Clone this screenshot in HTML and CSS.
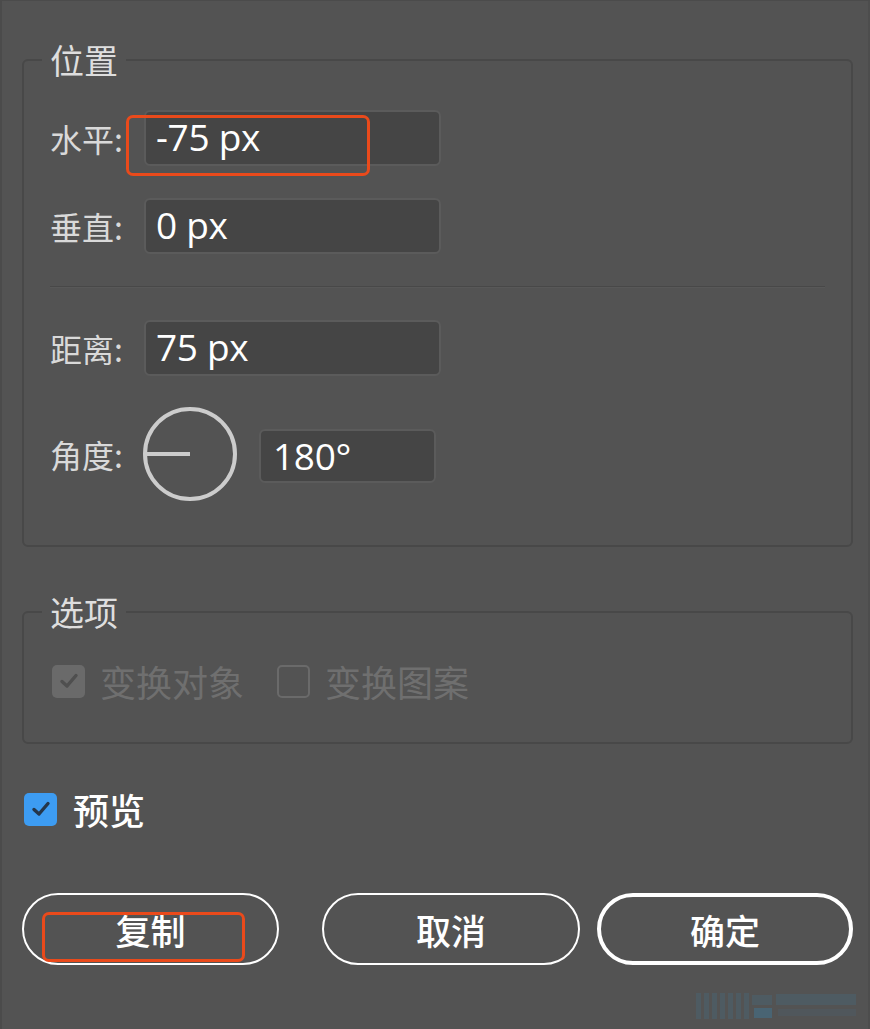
FILE: index.html
```html
<!DOCTYPE html>
<html lang="zh-CN">
<head>
<meta charset="utf-8">
<title>移动</title>
<link rel="stylesheet" href="styles.css">
</head>
<body>
<div class="dialog">
  <fieldset class="group group-position">
    <legend class="group-title">位置</legend>
    <div class="row">
      <span class="label">水平:</span>
      <div class="field field-wide">-75 px</div>
      <span class="mark mark-h"></span>
    </div>
    <div class="row">
      <span class="label">垂直:</span>
      <div class="field field-wide">0 px</div>
    </div>
    <div class="divider"></div>
    <div class="row">
      <span class="label">距离:</span>
      <div class="field field-wide">75 px</div>
    </div>
    <div class="row row-angle">
      <span class="label">角度:</span>
      <svg class="dial" width="96" height="96" viewBox="0 0 96 96">
        <circle cx="48" cy="48" r="45" fill="none" stroke="#cccccc" stroke-width="4"/>
        <line x1="4" y1="48" x2="48" y2="48" stroke="#cccccc" stroke-width="4"/>
      </svg>
      <div class="field field-angle">180°</div>
    </div>
  </fieldset>

  <fieldset class="group group-options">
    <legend class="group-title">选项</legend>
    <div class="options">
      <label class="check disabled">
        <span class="box box-checked-dim">
          <svg width="22" height="22" viewBox="0 0 22 22"><polyline points="4,11.5 9,16 18,5.5" fill="none" stroke="#4f4f4f" stroke-width="3.4" stroke-linecap="round" stroke-linejoin="round"/></svg>
        </span>
        <span class="check-text">变换对象</span>
      </label>
      <label class="check disabled">
        <span class="box box-empty"></span>
        <span class="check-text">变换图案</span>
      </label>
    </div>
  </fieldset>

  <label class="check preview">
    <span class="box box-blue">
      <svg width="22" height="22" viewBox="0 0 22 22"><polyline points="4,11.5 9,16 18,5.5" fill="none" stroke="#25364a" stroke-width="3.4" stroke-linecap="round" stroke-linejoin="round"/></svg>
    </span>
    <span class="check-text">预览</span>
  </label>

  <div class="buttons">
    <div class="btn btn-copy">复制<span class="mark mark-copy"></span></div>
    <div class="btn btn-cancel">取消</div>
    <div class="btn btn-ok">确定</div>
  </div>

  <svg class="watermark" width="166" height="32" viewBox="0 0 166 32">
    <g fill="#4a6676" opacity="0.45">
      <rect x="2" y="2" width="5" height="26"/>
      <rect x="10" y="2" width="5" height="26"/>
      <rect x="18" y="2" width="5" height="26"/>
      <rect x="26" y="2" width="5" height="26"/>
      <rect x="34" y="2" width="5" height="26"/>
      <rect x="42" y="2" width="5" height="26"/>
      <rect x="50" y="2" width="5" height="26"/>
      <rect x="58" y="4" width="20" height="10"/>
      <rect x="60" y="17" width="18" height="10" fill="#3f7a9a"/>
      <rect x="82" y="3" width="80" height="11"/>
      <rect x="84" y="18" width="78" height="7" opacity="0.6"/>
    </g>
  </svg>
</div>
</body>
</html>
```

FILE: styles.css
```css
html, body {
  margin: 0;
  padding: 0;
}

body {
  width: 870px;
  height: 1029px;
  background: #535353;
  font-family: "Noto Sans CJK SC", "Noto Sans", sans-serif;
  color: #dcdcdc;
  overflow: hidden;
}

.dialog {
  position: relative;
  box-sizing: border-box;
  width: 870px;
  height: 1029px;
  padding: 42px 17px 0 22px;
  box-shadow: inset 2px 1px 0 #4b4b4b, inset -2px 0 0 #4d4d4d;
}

.group {
  margin: 0;
  padding: 0 26px;
  border: 2px solid #484848;
  border-radius: 6px;
  min-inline-size: 0;
}

.group-title {
  margin-left: -8px;
  padding: 0 8px;
  font-size: 34px;
  line-height: 36px;
  color: #dedede;
}

.group-position {
  padding-bottom: 45px;
}

.row {
  position: relative;
  display: flex;
  align-items: center;
  margin-top: 32px;
  height: 56px;
}

.row-angle {
  height: 92px;
}

.label {
  width: 94px;
  flex: none;
  font-size: 32px;
  line-height: 36px;
  color: #d9d9d9;
}

.field {
  box-sizing: border-box;
  height: 56px;
  padding-left: 10px;
  background: #454545;
  border: 2px solid #5b5b5b;
  border-radius: 6px;
  font-family: "Open Sans", "Noto Sans", sans-serif;
  font-size: 37px;
  line-height: 50px;
  color: #ffffff;
  letter-spacing: -0.3px;
}

.field-wide {
  width: 297px;
}

.field-angle {
  width: 177px;
  height: 54px;
  line-height: 49px;
  margin-left: 21px;
  padding-left: 12px;
  margin-top: 4px;
}

.dial {
  display: block;
  flex: none;
  margin-left: -2px;
}

.divider {
  margin-top: 32px;
  height: 1px;
  background: #484848;
  border-bottom: 1px solid #585858;
}

.mark {
  position: absolute;
  box-sizing: border-box;
  border: 3px solid #ea4a1b;
  border-radius: 7px;
}

.mark-h {
  left: 76px;
  top: 5px;
  width: 244px;
  height: 61px;
}

.group-options {
  margin-top: 47px;
  padding-bottom: 43px;
}

.options {
  display: flex;
  align-items: center;
  margin-top: 33px;
  height: 36px;
  padding-left: 2px;
}

.check {
  display: flex;
  align-items: center;
}

.check + .check {
  margin-left: 33px;
}

.box {
  box-sizing: border-box;
  width: 33px;
  height: 33px;
  flex: none;
  border-radius: 5px;
  display: flex;
  align-items: center;
  justify-content: center;
}

.box-checked-dim {
  background: #6a6a6a;
}

.box-empty {
  border: 2px solid #6a6a6a;
}

.box-blue {
  background: #3d9cf2;
}

.check-text {
  margin-left: 15px;
  font-size: 36px;
  line-height: 40px;
}

.disabled .check-text {
  color: #6f6f6f;
}

.preview {
  margin-top: 45px;
  margin-left: 2px;
  height: 40px;
}

.preview .check-text {
  margin-left: 16px;
  color: #ffffff;
  font-weight: 500;
}

.buttons {
  display: flex;
  margin-top: 64px;
}

.btn {
  position: relative;
  box-sizing: border-box;
  height: 72px;
  border: 2px solid #ffffff;
  border-radius: 36px;
  display: flex;
  align-items: center;
  justify-content: center;
  font-size: 35px;
  color: #ffffff;
  font-weight: 500;
}

.btn-copy {
  width: 257px;
}

.btn-cancel {
  width: 258px;
  margin-left: 43px;
}

.btn-ok {
  width: 256px;
  margin-left: 17px;
  border-width: 4px;
}

.mark-copy {
  left: 18px;
  top: 17px;
  width: 203px;
  height: 50px;
}

.watermark {
  position: absolute;
  right: 10px;
  bottom: 6px;
}
```
